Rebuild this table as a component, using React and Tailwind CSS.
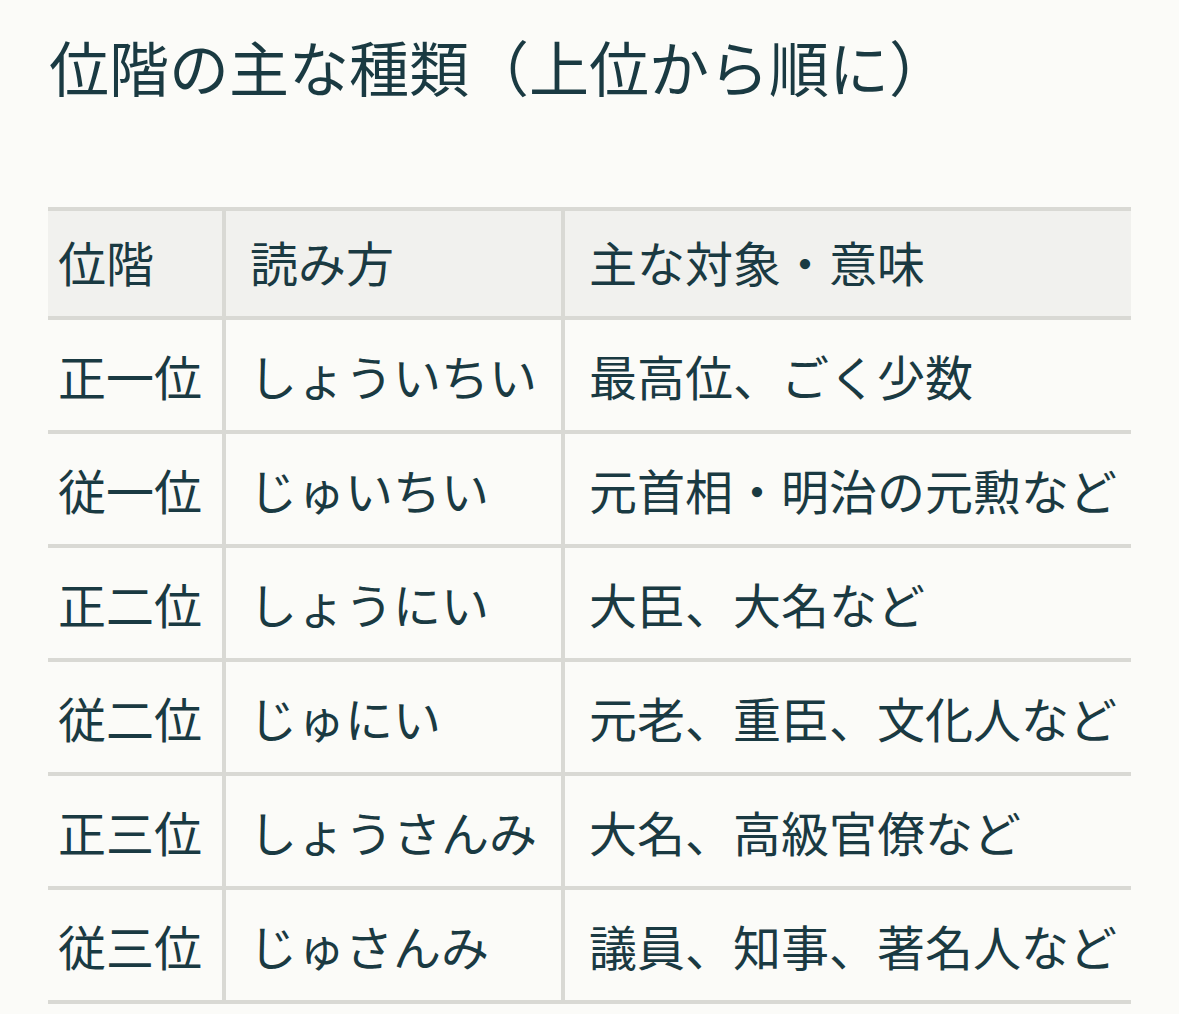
import React from "react";

const rows = [
  { rank: "正一位", yomi: "しょういちい", desc: "最高位、ごく少数" },
  { rank: "従一位", yomi: "じゅいちい", desc: "元首相・明治の元勲など" },
  { rank: "正二位", yomi: "しょうにい", desc: "大臣、大名など" },
  { rank: "従二位", yomi: "じゅにい", desc: "元老、重臣、文化人など" },
  { rank: "正三位", yomi: "しょうさんみ", desc: "大名、高級官僚など" },
  { rank: "従三位", yomi: "じゅさんみ", desc: "議員、知事、著名人など" },
];

const App = () => {
  return (
    <div
      className="min-h-[1014px] bg-[#fbfbf8] text-[#1a3a42] px-[48px] pt-[28px]"
      style={{ fontFamily: '"Noto Sans CJK JP", "Noto Sans", sans-serif' }}
    >
      <h1 className="text-[60px] leading-[76px] font-normal pl-[1px]">
        位階の主な種類（上位から順に）
      </h1>

      <table className="mt-[103px] w-[1083px] table-fixed border-collapse text-[48px] leading-[64px]">
        <colgroup>
          <col className="w-[176px]" />
          <col className="w-[339px]" />
          <col />
        </colgroup>
        <thead>
          <tr className="bg-[#f1f1ee] border-t-4 border-b-4 border-[#d9d9d4]">
            <th className="h-[109px] text-left font-normal pl-[10px] pb-[6px] border-r-4 border-[#d9d9d4]">位階</th>
            <th className="text-left font-normal pl-[24px] pb-[6px] border-r-4 border-[#d9d9d4]">読み方</th>
            <th className="text-left font-normal pl-[24px] pb-[6px]">主な対象・意味</th>
          </tr>
        </thead>
        <tbody>
          {rows.map((r) => (
            <tr key={r.rank} className="border-b-4 border-[#d9d9d4]">
              <td className="h-[114px] pl-[10px] border-r-4 border-[#d9d9d4] whitespace-nowrap">{r.rank}</td>
              <td className="pl-[23px] border-r-4 border-[#d9d9d4] whitespace-nowrap">{r.yomi}</td>
              <td className="pl-[24px] whitespace-nowrap">{r.desc}</td>
            </tr>
          ))}
        </tbody>
      </table>
    </div>
  );
};

export default App;
